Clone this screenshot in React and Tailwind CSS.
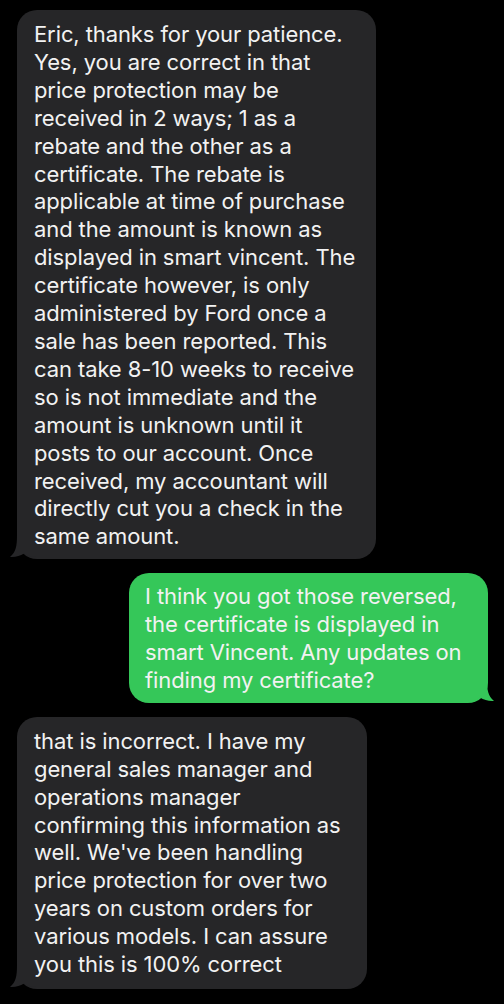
import React from "react";

const font = { fontFamily: "Inter, 'Liberation Sans', sans-serif" };

function TailLeft({ color }) {
  return (
    <svg
      className="absolute left-[-8px] bottom-[0px]"
      width="30"
      height="24"
      viewBox="0 0 30 24"
    >
      <path
        d="M8 0 C8 11 7 17 1 22 C6 22.5 11 21 15 18.5 C18 20.5 22 22 30 22 L30 0 Z"
        fill={color}
      />
    </svg>
  );
}

function TailRight({ color }) {
  return (
    <svg
      className="absolute right-[-7px] bottom-[0px]"
      width="30"
      height="24"
      viewBox="0 0 30 24"
    >
      <path
        d="M22 0 C22 11 23 17 29 22 C24 22.5 19 21 15 18.5 C12 20.5 8 22 0 22 L0 0 Z"
        fill={color}
      />
    </svg>
  );
}

function Lines({ lines }) {
  return (
    <div
      className="relative text-[22px] leading-[27.9px] tracking-[-0.1px] text-[#f2f2f2]"
      style={font}
    >
      {lines.map((l, i) => (
        <div key={i} className="whitespace-nowrap">
          {l}
        </div>
      ))}
    </div>
  );
}

export default function App() {
  const m1 = [
    "Eric, thanks for your patience.",
    "Yes, you are correct in that",
    "price protection may be",
    "received in 2 ways; 1 as a",
    "rebate and the other as a",
    "certificate. The rebate is",
    "applicable at time of purchase",
    "and the amount is known as",
    "displayed in smart vincent. The",
    "certificate however, is only",
    "administered by Ford once a",
    "sale has been reported. This",
    "can take 8-10 weeks to receive",
    "so is not immediate and the",
    "amount is unknown until it",
    "posts to our account. Once",
    "received, my accountant will",
    "directly cut you a check in the",
    "same amount.",
  ];
  const m2 = [
    "I think you got those reversed,",
    "the certificate is displayed in",
    "smart Vincent. Any updates on",
    "finding my certificate?",
  ];
  const m3 = [
    "that is incorrect. I have my",
    "general sales manager and",
    "operations manager",
    "confirming this information as",
    "well. We've been handling",
    "price protection for over two",
    "years on custom orders for",
    "various models. I can assure",
    "you this is 100% correct",
  ];
  return (
    <div className="w-[504px] h-[1004px] bg-black overflow-hidden flex flex-col items-start gap-[14px] pt-[10px] pl-[17px] pr-[16px]">
      <div className="relative w-[359px] rounded-[20px] bg-[#262628] pl-[17px] pt-[11px] pb-[8px]">
        <TailLeft color="#262628" />
        <Lines lines={m1} />
      </div>
      <div className="relative self-end w-[359px] rounded-[20px] bg-[#35c759] pl-[16px] pt-[10px] pb-[8px]">
        <TailRight color="#35c759" />
        <Lines lines={m2} />
      </div>
      <div className="relative w-[350px] rounded-[20px] bg-[#262628] pl-[17px] pt-[11px] pb-[10px]">
        <TailLeft color="#262628" />
        <Lines lines={m3} />
      </div>
    </div>
  );
}
